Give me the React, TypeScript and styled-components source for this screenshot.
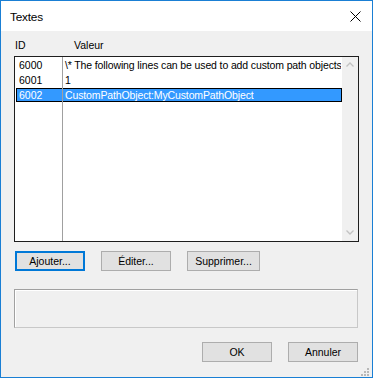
import React from 'react';
import styled, { createGlobalStyle } from 'styled-components';

const GlobalStyle = createGlobalStyle`
  html, body {
    margin: 0;
    padding: 0;
    background: #ffffff;
  }
  * {
    box-sizing: border-box;
  }
`;

// Window frame
const Window = styled.div`
  width: 373px;
  height: 378px;
  border: 1px solid #1a7fd4;
  display: flex;
  flex-direction: column;
  font-family: 'Liberation Sans', Arial, sans-serif;
  font-size: 10.5px;
  color: #000;
  background: #f0f0f0;
  position: relative;
  overflow: hidden;
`;

const TitleBar = styled.div`
  height: 30px;
  background: #ffffff;
  display: flex;
  align-items: center;
  justify-content: space-between;
  padding: 0 11px 0 9px;
`;

const Title = styled.span`
  font-size: 11.8px;
  letter-spacing: -0.2px;
  padding-top: 1px;
`;

const CloseButton = styled.div`
  width: 12px;
  height: 12px;
  display: flex;
  align-items: center;
  justify-content: center;
  margin-top: 1px;
`;

const Body = styled.div`
  flex: 1;
  display: flex;
  flex-direction: column;
  padding: 8px 13px 0 13px;
`;

const HeaderRow = styled.div`
  display: flex;
  height: 12px;
  line-height: 12px;
  margin-bottom: 5px;
`;

const HeaderLabel = styled.span<{ $width?: number }>`
  width: ${(p) => (p.$width ? `${p.$width}px` : 'auto')};
  padding-left: 1px;
`;

// List view
const ListBox = styled.div`
  height: 186px;
  border: 1px solid #1e1e1e;
  background: #ffffff;
  display: flex;
`;

const RowsArea = styled.div`
  flex: 1;
  position: relative;
  overflow: hidden;
`;

const ColumnLine = styled.div`
  position: absolute;
  top: 0;
  bottom: 0;
  left: 47px;
  width: 1px;
  background: #a0a0a0;
  pointer-events: none;
`;

const Row = styled.div`
  height: 15px;
  padding: 1px 0 0 1px;
`;

const RowInner = styled.div<{ $selected?: boolean }>`
  height: 14px;
  display: flex;
  align-items: center;
  border: 1px solid ${(p) => (p.$selected ? '#000' : 'transparent')};
  background: ${(p) => (p.$selected ? '#3399ff' : 'transparent')};
  color: ${(p) => (p.$selected ? '#ffffff' : '#000')};
  white-space: nowrap;
`;

const IdCell = styled.span`
  width: 45px;
  flex-shrink: 0;
  padding-left: 2px;
`;

const ValueCell = styled.span`
  padding-left: 3px;
  overflow: hidden;
  letter-spacing: -0.13px;
`;

const ScrollBar = styled.div`
  width: 16px;
  background: #f0f0f0;
  display: flex;
  flex-direction: column;
  justify-content: space-between;
  align-items: center;
  padding: 5px 0 6px 0;
`;

// Buttons
const ButtonRow = styled.div`
  display: flex;
  gap: 16px;
  margin-top: 9px;
  padding-left: 1px;
`;

const FooterRow = styled.div`
  display: flex;
  justify-content: flex-end;
  gap: 16px;
  margin-top: 14px;
  padding-right: 1px;
`;

const Button = styled.div<{ $default?: boolean; $width?: number }>`
  width: ${(p) => p.$width ?? 70}px;
  height: 20px;
  background: #e1e1e1;
  border: ${(p) => (p.$default ? '2px solid #0078d7' : '1px solid #adadad')};
  display: flex;
  align-items: center;
  justify-content: center;
  padding-bottom: 1px;
`;

const GroupBox = styled.div`
  height: 39px;
  margin: 18px 1px 0 0;
  border: 1px solid #a0a0a0;
  border-right-color: #c8c8c8;
  border-bottom-color: #c8c8c8;
  box-shadow: inset 1px 1px 0 #ffffff;
`;

const Grip = styled.div`
  position: absolute;
  right: 3px;
  bottom: 3px;
  width: 8px;
  height: 8px;
`;

const rows = [
  { id: '6000', value: '\\* The following lines can be used to add custom path objects' },
  { id: '6001', value: '1' },
  { id: '6002', value: 'CustomPathObject:MyCustomPathObject', selected: true },
];

const Chevron: React.FC<{ down?: boolean }> = ({ down }) => (
  <svg width="8" height="5" viewBox="0 0 8 5">
    <path
      d={down ? 'M0.5 0.5 L4 4 L7.5 0.5' : 'M0.5 4.5 L4 1 L7.5 4.5'}
      fill="none"
      stroke="#c2c2c2"
      strokeWidth="1.3"
    />
  </svg>
);

const App: React.FC = () => {
  return (
    <>
      <GlobalStyle />
      <Window>
        <TitleBar>
          <Title>Textes</Title>
          <CloseButton>
            <svg width="11" height="11" viewBox="0 0 11 11">
              <path d="M0.5 0.5 L10.5 10.5 M10.5 0.5 L0.5 10.5" stroke="#000" strokeWidth="1" />
            </svg>
          </CloseButton>
        </TitleBar>
        <Body>
          <HeaderRow>
            <HeaderLabel $width={59}>ID</HeaderLabel>
            <HeaderLabel>Valeur</HeaderLabel>
          </HeaderRow>
          <ListBox>
            <RowsArea>
              {rows.map((r) => (
                <Row key={r.id}>
                  <RowInner $selected={r.selected}>
                    <IdCell>{r.id}</IdCell>
                    <ValueCell>{r.value}</ValueCell>
                  </RowInner>
                </Row>
              ))}
              <ColumnLine />
            </RowsArea>
            <ScrollBar>
              <Chevron />
              <Chevron down />
            </ScrollBar>
          </ListBox>
          <ButtonRow>
            <Button $default>Ajouter...</Button>
            <Button>Éditer...</Button>
            <Button $width={73}>Supprimer...</Button>
          </ButtonRow>
          <GroupBox />
          <FooterRow>
            <Button>OK</Button>
            <Button>Annuler</Button>
          </FooterRow>
        </Body>
        <Grip>
          <svg width="8" height="8" viewBox="0 0 8 8">
            {[
              [6, 0],
              [3, 3],
              [6, 3],
              [0, 6],
              [3, 6],
              [6, 6],
            ].map(([x, y]) => (
              <rect key={`${x}-${y}`} x={x} y={y} width="2" height="2" fill="#b8b8b8" />
            ))}
          </svg>
        </Grip>
      </Window>
    </>
  );
};

export default App;
